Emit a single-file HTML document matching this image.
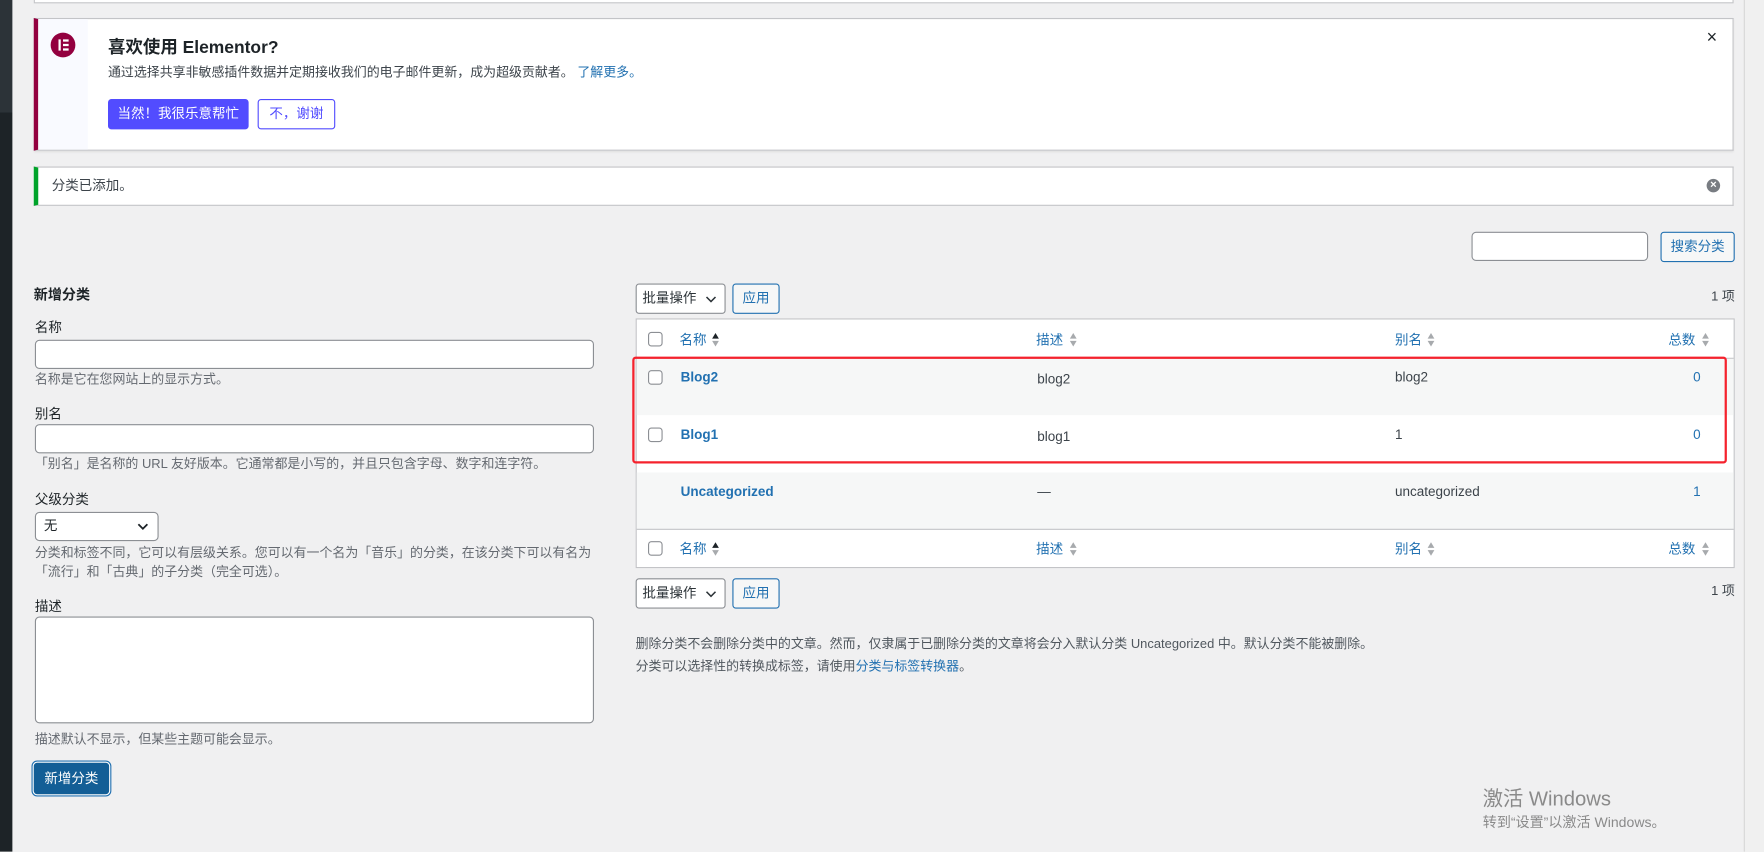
<!DOCTYPE html>
<html><head><meta charset="utf-8"><style>
html,body{margin:0;padding:0;width:1764px;height:852px;overflow:hidden;background:#f0f0f1;}
#w{position:absolute;left:0;top:0;width:1568px;height:757px;transform:scale(1.125);transform-origin:0 0;font-family:"Liberation Sans","Noto Sans CJK SC",sans-serif;color:#3c434a;font-size:12px;}
.a{position:absolute;}
.t{position:absolute;white-space:nowrap;line-height:1;}
.box{position:absolute;background:#fff;border:1px solid #c3c4c7;box-sizing:border-box;}
.inp{position:absolute;background:#fff;border:1px solid #8c8f94;border-radius:4px;box-sizing:border-box;}
.btn2{position:absolute;border:1px solid #2271b1;color:#2271b1;background:#f6f7f7;border-radius:3px;box-sizing:border-box;font-size:12px;text-align:center;}
.cb{position:absolute;width:13px;height:13px;border:1px solid #8c8f94;border-radius:3px;background:#fff;box-sizing:border-box;}
.lk{color:#2271b1;}
.sort{position:absolute;width:8px;height:14px;}
.hint{color:#646970;font-size:11.5px;}
</style></head><body><div id="w">
<div class="a" style="left:0;top:0;width:11px;height:100px;background:#2c3338"></div>
<div class="a" style="left:0;top:100px;width:11px;height:657px;background:#1d2327"></div>
<div class="a" style="left:1550px;top:0;width:18px;height:757px;background:#f0f0f0;border-left:1px solid #d6d6d6"></div>
<div class="box" style="left:30px;top:-10px;width:1511px;height:13px"></div>

<!-- elementor notice -->
<div class="box" style="left:30px;top:16px;width:1511px;height:118px;border-left:4px solid #93003f;box-shadow:0 1px 2px rgba(0,0,0,.08)"></div>
<div class="a" style="left:34px;top:17px;width:44px;height:116px;background:#f9faff"></div>
<div class="a" style="left:45px;top:29px;width:22px;height:22px;border-radius:50%;background:#93003f"></div>
<div class="a" style="left:52px;top:35px;width:2px;height:10px;background:#fff"></div>
<div class="a" style="left:56px;top:35px;width:5px;height:2px;background:#fff"></div>
<div class="a" style="left:56px;top:39px;width:5px;height:2px;background:#fff"></div>
<div class="a" style="left:56px;top:43px;width:5px;height:2px;background:#fff"></div>
<div class="t" style="left:96px;top:35px;font-size:15.5px;font-weight:bold;color:#1d2327">喜欢使用 Elementor?</div>
<div class="t" style="left:96px;top:60px;font-size:11.5px">通过选择共享非敏感插件数据并定期接收我们的电子邮件更新，成为超级贡献者。 <span class="lk">了解更多。</span></div>
<div class="a" style="left:96px;top:88px;width:125px;height:27px;background:#524cff;border-radius:3px;color:#fff;font-size:12px;line-height:27px;text-align:center">当然！我很乐意帮忙</div>
<div class="a" style="left:229px;top:88px;width:69px;height:27px;border:1px solid #524cff;box-sizing:border-box;border-radius:3px;color:#524cff;font-size:12px;line-height:25px;text-align:center;background:#fff">不，谢谢</div>
<div class="t" style="left:1517px;top:26px;font-size:16px;color:#1d2327">×</div>

<!-- success -->
<div class="box" style="left:30px;top:148px;width:1511px;height:35px;border-left:4px solid #00a32a"></div>
<div class="t" style="left:46px;top:159px;font-size:12px;color:#3c434a">分类已添加。</div>
<div class="a" style="left:1517px;top:159px;width:12px;height:12px;border-radius:50%;background:#787c82;color:#fff;font-size:10px;line-height:12px;text-align:center;font-weight:bold">×</div>

<!-- search -->
<div class="inp" style="left:1308px;top:206px;width:157px;height:26px"></div>
<div class="btn2" style="left:1476px;top:206px;width:66px;height:27px;line-height:25px">搜索分类</div>

<!-- left form -->
<div class="t" style="left:30px;top:256px;font-size:12.5px;font-weight:bold;color:#1d2327">新增分类</div>
<div class="t" style="left:31px;top:285px;font-size:12px;color:#1d2327">名称</div>
<div class="inp" style="left:31px;top:302px;width:497px;height:26px"></div>
<div class="t hint" style="left:31px;top:333px">名称是它在您网站上的显示方式。</div>
<div class="t" style="left:31px;top:362px;font-size:12px;color:#1d2327">别名</div>
<div class="inp" style="left:31px;top:377px;width:497px;height:26px"></div>
<div class="t hint" style="left:31px;top:408px">「别名」是名称的 URL 友好版本。它通常都是小写的，并且只包含字母、数字和连字符。</div>
<div class="t" style="left:31px;top:438px;font-size:12px;color:#1d2327">父级分类</div>
<div class="inp" style="left:31px;top:455px;width:110px;height:26px"></div>
<div class="t" style="left:39px;top:461px;font-size:12px;color:#1d2327">无</div>
<svg class="a" style="left:122px;top:464px" width="10" height="8" viewBox="0 0 10 8"><path d="M1 2l4 4 4-4" fill="none" stroke="#1d2327" stroke-width="1.6"/></svg>
<div class="t hint" style="left:31px;top:487px">分类和标签不同，它可以有层级关系。您可以有一个名为「音乐」的分类，在该分类下可以有名为</div>
<div class="t hint" style="left:31px;top:504px">「流行」和「古典」的子分类（完全可选）。</div>
<div class="t" style="left:31px;top:533px;font-size:12px;color:#1d2327">描述</div>
<div class="inp" style="left:31px;top:548px;width:497px;height:95px"></div>
<div class="t hint" style="left:31px;top:653px">描述默认不显示，但某些主题可能会显示。</div>
<div class="a" style="left:30px;top:678px;width:67px;height:28px;background:#135e96;border:1px solid #135e96;box-shadow:0 0 0 1px #fff,0 0 0 2px #2271b1;border-radius:3px;box-sizing:border-box;color:#fff;font-size:12px;line-height:26px;text-align:center">新增分类</div>

<!-- right -->
<div class="a" style="left:565px;top:252px;width:80px;height:27px;background:#fff;border:1px solid #8c8f94;border-radius:3px;box-sizing:border-box;font-size:12px;line-height:25px;padding-left:5px;color:#2c3338">批量操作</div>
<svg class="a" style="left:627px;top:262px" width="10" height="8" viewBox="0 0 10 8"><path d="M1 2l4 4 4-4" fill="none" stroke="#2c3338" stroke-width="1.4"/></svg>
<div class="btn2" style="left:651px;top:252px;width:42px;height:27px;line-height:25px">应用</div>
<div class="t" style="left:1521px;top:259px;font-size:11.5px">1 项</div>

<div class="box" style="left:565px;top:283px;width:977px;height:222px"></div>
<div class="a" style="left:566px;top:318px;width:975px;height:1px;background:#c3c4c7"></div>
<div class="a" style="left:566px;top:319px;width:975px;height:50px;background:#f6f7f7"></div>
<div class="a" style="left:566px;top:420px;width:975px;height:50px;background:#f6f7f7"></div>
<div class="a" style="left:566px;top:470px;width:975px;height:1px;background:#c3c4c7"></div>

<!-- header -->
<div class="cb" style="left:576px;top:295px"></div>
<div class="t lk" style="left:604px;top:296px;font-size:12px">名称</div>
<svg class="sort" style="left:632px;top:295px" viewBox="0 0 8 14"><path d="M4 1l3 5H1z" fill="#1d2327"/><path d="M4 13l3-5H1z" fill="#a7aaad"/></svg>
<div class="t lk" style="left:921px;top:296px;font-size:12px">描述</div>
<svg class="sort" style="left:950px;top:295px" viewBox="0 0 8 14"><path d="M4 1l3 5H1z" fill="#a7aaad"/><path d="M4 13l3-5H1z" fill="#a7aaad"/></svg>
<div class="t lk" style="left:1240px;top:296px;font-size:12px">别名</div>
<svg class="sort" style="left:1268px;top:295px" viewBox="0 0 8 14"><path d="M4 1l3 5H1z" fill="#a7aaad"/><path d="M4 13l3-5H1z" fill="#a7aaad"/></svg>
<div class="t lk" style="left:1483px;top:296px;font-size:12px">总数</div>
<svg class="sort" style="left:1512px;top:295px" viewBox="0 0 8 14"><path d="M4 1l3 5H1z" fill="#a7aaad"/><path d="M4 13l3-5H1z" fill="#a7aaad"/></svg>

<!-- rows -->
<div class="cb" style="left:576px;top:329px"></div>
<div class="t lk" style="left:605px;top:329px;font-size:12px;font-weight:bold">Blog2</div>
<div class="t" style="left:922px;top:331px;font-size:12px">blog2</div>
<div class="t" style="left:1240px;top:329px;font-size:12px">blog2</div>
<div class="t lk" style="left:1505px;top:329px;font-size:12px">0</div>

<div class="cb" style="left:576px;top:380px"></div>
<div class="t lk" style="left:605px;top:380px;font-size:12px;font-weight:bold">Blog1</div>
<div class="t" style="left:922px;top:382px;font-size:12px">blog1</div>
<div class="t" style="left:1240px;top:380px;font-size:12px">1</div>
<div class="t lk" style="left:1505px;top:380px;font-size:12px">0</div>

<div class="t lk" style="left:605px;top:431px;font-size:12px;font-weight:bold">Uncategorized</div>
<div class="t" style="left:922px;top:431px;font-size:12px">—</div>
<div class="t" style="left:1240px;top:431px;font-size:12px">uncategorized</div>
<div class="t lk" style="left:1505px;top:431px;font-size:12px">1</div>

<!-- footer header -->
<div class="cb" style="left:576px;top:481px"></div>
<div class="t lk" style="left:604px;top:482px;font-size:12px">名称</div>
<svg class="sort" style="left:632px;top:481px" viewBox="0 0 8 14"><path d="M4 1l3 5H1z" fill="#1d2327"/><path d="M4 13l3-5H1z" fill="#a7aaad"/></svg>
<div class="t lk" style="left:921px;top:482px;font-size:12px">描述</div>
<svg class="sort" style="left:950px;top:481px" viewBox="0 0 8 14"><path d="M4 1l3 5H1z" fill="#a7aaad"/><path d="M4 13l3-5H1z" fill="#a7aaad"/></svg>
<div class="t lk" style="left:1240px;top:482px;font-size:12px">别名</div>
<svg class="sort" style="left:1268px;top:481px" viewBox="0 0 8 14"><path d="M4 1l3 5H1z" fill="#a7aaad"/><path d="M4 13l3-5H1z" fill="#a7aaad"/></svg>
<div class="t lk" style="left:1483px;top:482px;font-size:12px">总数</div>
<svg class="sort" style="left:1512px;top:481px" viewBox="0 0 8 14"><path d="M4 1l3 5H1z" fill="#a7aaad"/><path d="M4 13l3-5H1z" fill="#a7aaad"/></svg>

<!-- red highlight -->
<div class="a" style="left:562px;top:317px;width:973px;height:95px;border:2px solid #f5222d;border-radius:3px;box-sizing:border-box"></div>

<!-- bottom bulk -->
<div class="a" style="left:565px;top:514px;width:80px;height:27px;background:#fff;border:1px solid #8c8f94;border-radius:3px;box-sizing:border-box;font-size:12px;line-height:25px;padding-left:5px;color:#2c3338">批量操作</div>
<svg class="a" style="left:627px;top:524px" width="10" height="8" viewBox="0 0 10 8"><path d="M1 2l4 4 4-4" fill="none" stroke="#2c3338" stroke-width="1.4"/></svg>
<div class="btn2" style="left:651px;top:514px;width:42px;height:27px;line-height:25px">应用</div>
<div class="t" style="left:1521px;top:521px;font-size:11.5px">1 项</div>

<div class="t" style="left:565px;top:568px;font-size:11.5px;color:#50575e">删除分类不会删除分类中的文章。然而，仅隶属于已删除分类的文章将会分入默认分类 Uncategorized 中。默认分类不能被删除。</div>
<div class="t" style="left:565px;top:588px;font-size:11.5px;color:#50575e">分类可以选择性的转换成标签，请使用<span class="lk">分类与标签转换器</span>。</div>

<div class="t" style="left:1318px;top:701px;font-size:18px;color:#8a8a8a">激活 Windows</div>
<div class="t" style="left:1318px;top:725px;font-size:12.5px;color:#8a8a8a">转到“设置”以激活 Windows。</div>
</div></body></html>
